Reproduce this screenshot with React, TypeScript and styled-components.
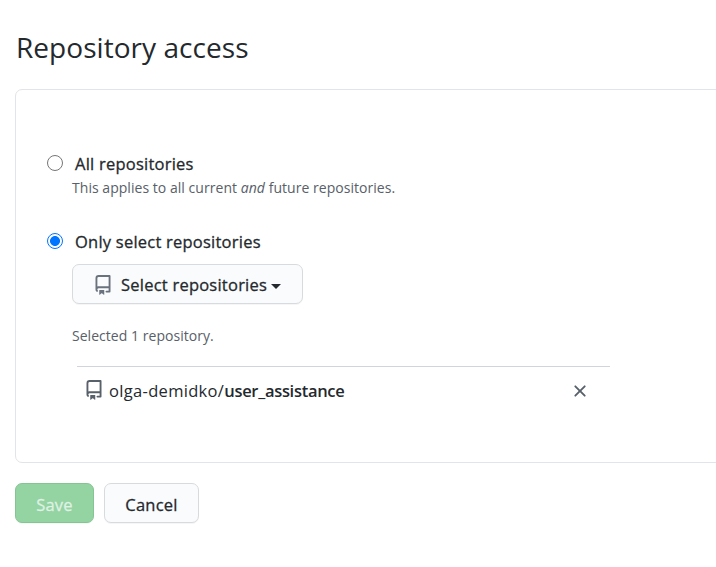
import React from "react";
import styled, { createGlobalStyle, css } from "styled-components";

const GlobalStyle = createGlobalStyle`
  * { box-sizing: border-box; }
  body {
    margin: 0;
    background: #fff;
    color: #24292e;
    font-family: "Segoe UI", "Open Sans", "Noto Sans", sans-serif;
    font-size: 17px;
    overflow: hidden;
  }
`;

const Page = styled.main`
  height: 567px;
  padding: 27px 0 0 15px;
  overflow: hidden;
`;

const Title = styled.h2`
  margin: 0 0 22px 1px;
  height: 40px;
  line-height: 40px;
  font-size: 28px;
  font-weight: 400;
  letter-spacing: 0.05px;
  white-space: nowrap;
`;

const Panel = styled.section`
  width: 720px;
  height: 374px;
  padding: 61px 0 0 31px;
  border: 1px solid #e1e4e8;
  border-radius: 7px;
`;

const Option = styled.label`
  display: flex;
  align-items: center;
  gap: 12px;
  height: 24px;
`;

const Radio = styled.input`
  appearance: none;
  flex: none;
  width: 16px;
  height: 16px;
  margin: 0;
  border: 1px solid #767676;
  border-radius: 50%;
  background: #fff;
  &:checked {
    border-color: #0075ff;
    background: radial-gradient(circle, #0075ff 4.6px, #fff 5.3px);
  }
`;

const mediumText = css`
  font-size: 16.5px;
  font-weight: 500;
  letter-spacing: 0.23px;
  -webkit-text-stroke: 0.3px currentColor;
  white-space: nowrap;
`;

const OptionLabel = styled.span`
  ${mediumText}
  padding-top: 1px;
  line-height: 24px;
`;

const Note = styled.p`
  margin: 0;
  padding-left: 25px;
  height: 24px;
  line-height: 24px;
  font-size: 14px;
  letter-spacing: 0.04px;
  color: #586069;
  white-space: nowrap;
`;

const Details = styled.div`
  height: 54px;
  padding-top: 1px;
`;

const Button = styled.button<{ $w: number; $primary?: boolean }>`
  ${mediumText}
  display: flex;
  align-items: center;
  justify-content: center;
  width: ${(p) => p.$w}px;
  height: 40px;
  padding: 3px 0 0;
  border: 1px solid #d8dbde;
  border-radius: 7px;
  background: #fafbfc;
  color: #24292e;
  box-shadow: 0 1px 0 rgba(27, 31, 35, 0.04);
  font-family: inherit;
  line-height: 24px;
  ${(p) =>
    p.$primary &&
    css`
      border-color: #85c594;
      background: #94d3a2;
      color: #dff2e3;
    `}
`;

const SelectButton = styled(Button)`
  justify-content: flex-start;
  margin: 11px 0 20px 25px;
  padding: 2px 0 0 20px;
`;

const ButtonText = styled.span`
  margin-left: 8px;
`;

const Caret = styled.span`
  margin: 2px 0 0 4px;
  border: 5px solid transparent;
  border-top-color: #24292e;
  border-bottom: 0;
`;

const RepoRow = styled.div`
  display: flex;
  align-items: center;
  width: 533px;
  height: 48px;
  margin: 18px 0 0 30px;
  padding: 0 20px 0 7px;
  border-top: 1px solid #d1d5da;
`;

const RepoName = styled.span`
  flex: 1;
  margin-left: 5px;
  font-size: 16.5px;
  line-height: 24px;
  white-space: nowrap;
`;

const Owner = styled.span`
  letter-spacing: 0.32px;
`;

const Name = styled.strong`
  font-weight: 600;
  letter-spacing: -0.3px;
`;

const Remove = styled.button`
  display: flex;
  margin-top: 1px;
  padding: 0;
  border: 0;
  background: none;
`;

const Actions = styled.div`
  display: flex;
  gap: 10px;
  margin-top: 20px;
`;

const Icon = styled.svg<{ $color: string }>`
  display: block;
  flex: none;
  width: 20px;
  height: 20px;
  fill: ${(p) => p.$color};
`;

const RowIcon = styled.div`
  margin-bottom: 1px;
`;

const RepoIcon = ({ color }: { color: string }) => (
  <Icon $color={color} viewBox="0 0 16 16" aria-hidden="true">
    <path
      fillRule="evenodd"
      d="M2 2.5A2.5 2.5 0 014.5 0h8.75a.75.75 0 01.75.75v12.5a.75.75 0 01-.75.75h-2.5a.75.75 0 110-1.5h1.75v-2h-8a1 1 0 00-.714 1.7.75.75 0 01-1.072 1.05A2.495 2.495 0 012 11.5v-9zm10.5-1V9h-8c-.356 0-.694.074-1 .208V2.5a1 1 0 011-1h8zM5 12.25v3.25a.25.25 0 00.4.2l1.45-1.087a.25.25 0 01.3 0L8.6 15.7a.25.25 0 00.4-.2v-3.25a.25.25 0 00-.25-.25h-3.5a.25.25 0 00-.25.25z"
    />
  </Icon>
);

const CloseIcon = () => (
  <Icon $color="#586069" viewBox="0 0 16 16" aria-hidden="true">
    <path
      fillRule="evenodd"
      d="M3.72 3.72a.75.75 0 011.06 0L8 6.94l3.22-3.22a.75.75 0 111.06 1.06L9.06 8l3.22 3.22a.75.75 0 11-1.06 1.06L8 9.06l-3.22 3.22a.75.75 0 01-1.06-1.06L6.94 8 3.72 4.78a.75.75 0 010-1.06z"
    />
  </Icon>
);

export default function App() {
  return (
    <Page>
      <GlobalStyle />
      <Title>Repository access</Title>
      <Panel>
        <Option>
          <Radio type="radio" name="access" />
          <OptionLabel>All repositories</OptionLabel>
        </Option>
        <Details>
          <Note>
            This applies to all current <em>and</em> future repositories.
          </Note>
        </Details>
        <Option>
          <Radio type="radio" name="access" defaultChecked />
          <OptionLabel>Only select repositories</OptionLabel>
        </Option>
        <SelectButton type="button" $w={231}>
          <RepoIcon color="#6a737d" />
          <ButtonText>Select repositories</ButtonText>
          <Caret />
        </SelectButton>
        <Note>Selected 1 repository.</Note>
        <RepoRow>
          <RowIcon>
            <RepoIcon color="#586069" />
          </RowIcon>
          <RepoName>
            <Owner>olga-demidko/</Owner>
            <Name>user_assistance</Name>
          </RepoName>
          <Remove type="button" aria-label="Remove repository">
            <CloseIcon />
          </Remove>
        </RepoRow>
      </Panel>
      <Actions>
        <Button type="button" $w={79} $primary>
          Save
        </Button>
        <Button type="button" $w={95}>
          Cancel
        </Button>
      </Actions>
    </Page>
  );
}
